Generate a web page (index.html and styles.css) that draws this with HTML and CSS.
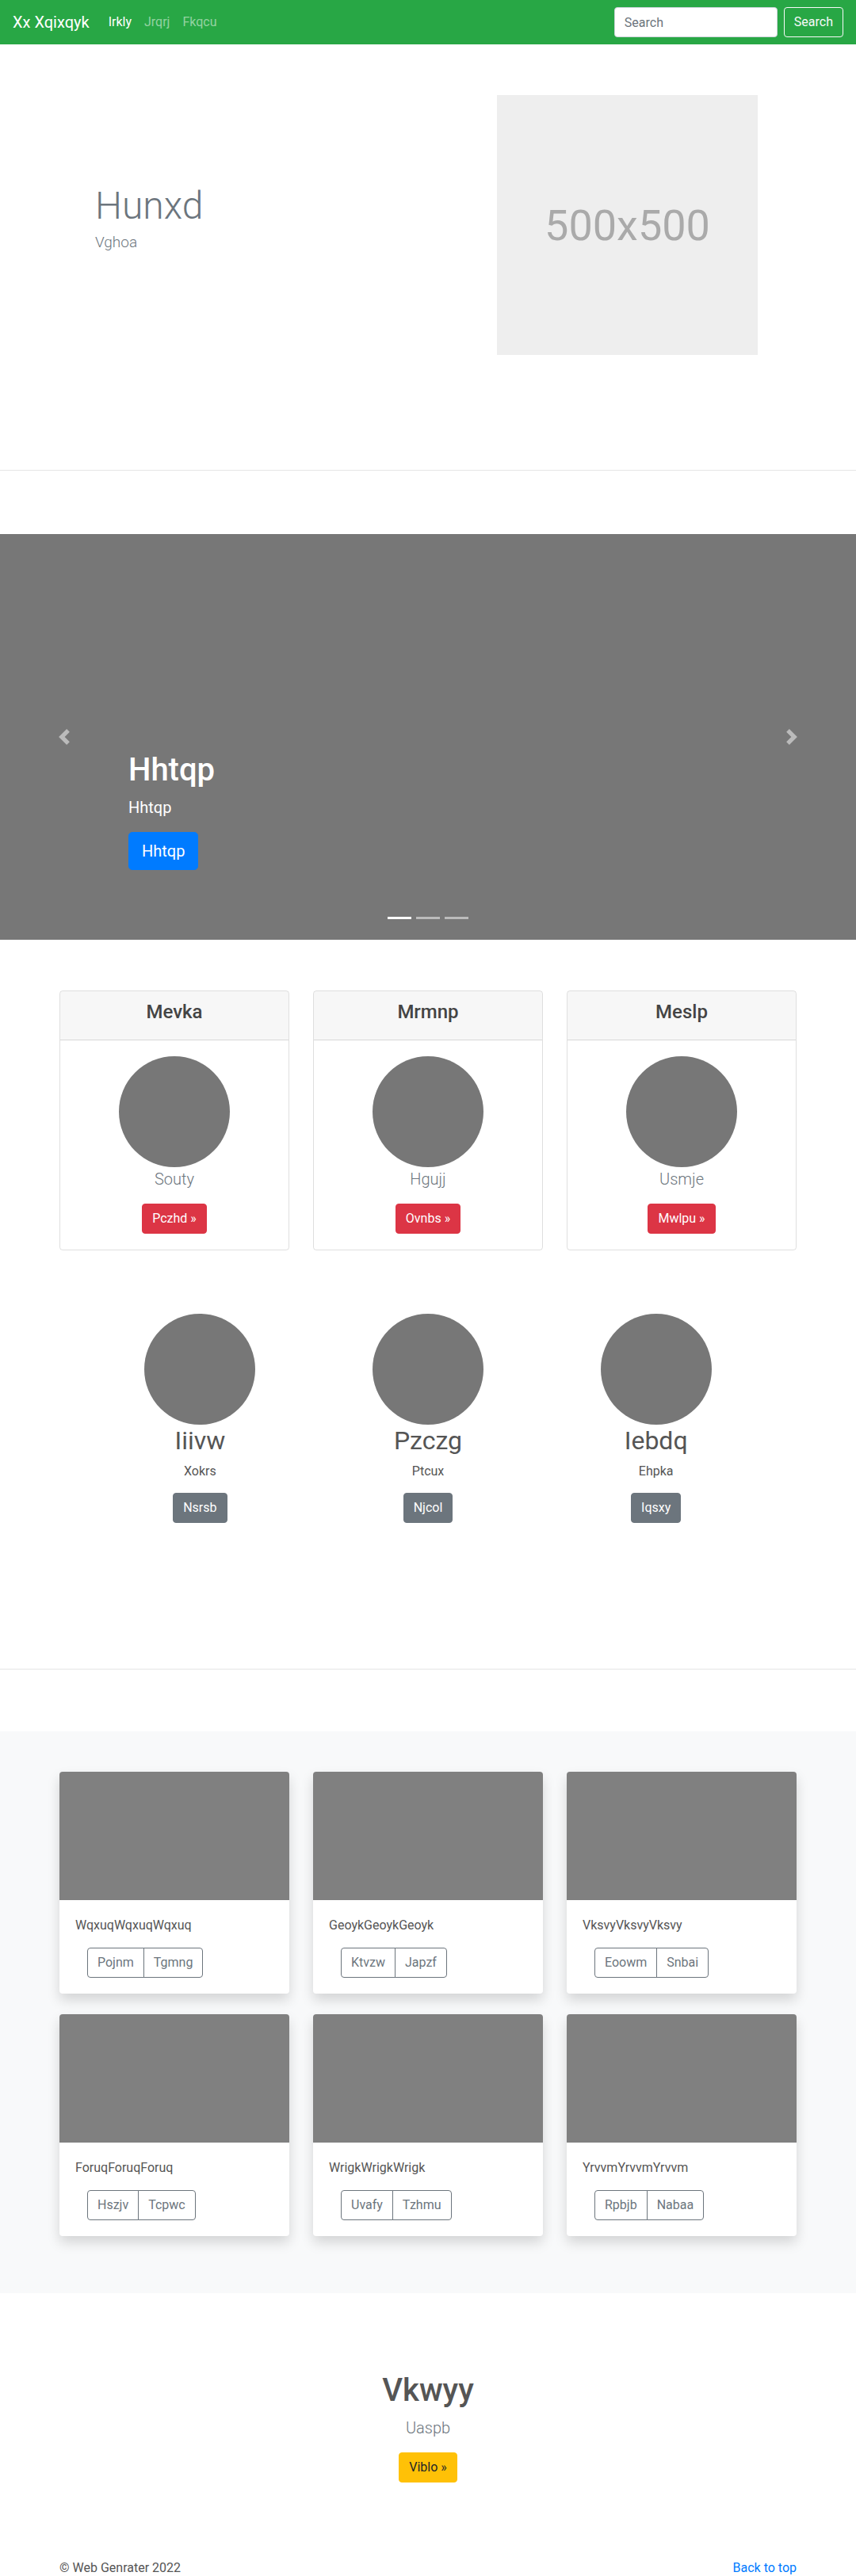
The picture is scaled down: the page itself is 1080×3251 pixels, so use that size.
FILE: index.html
```html
<!DOCTYPE html>
<html lang="en">
<head>
<meta charset="utf-8">
<title>Xx Xqixqyk</title>
<link rel="stylesheet" href="styles.css">
</head>
<body>
<nav class="navbar">
  <a class="brand" href="#">Xx Xqixqyk</a>
  <ul class="nav-links">
    <li><a class="nav-link active" href="#">Irkly</a></li>
    <li><a class="nav-link" href="#">Jrqrj</a></li>
    <li><a class="nav-link" href="#">Fkqcu</a></li>
  </ul>
  <form class="search">
    <input class="search-input" type="text" placeholder="Search">
    <button class="search-btn" type="button">Search</button>
  </form>
</nav>

<section class="hero">
  <div class="hero-inner">
    <div class="hero-text">
      <h1 class="hero-title">Hunxd</h1>
      <p class="hero-sub">Vghoa</p>
    </div>
    <div class="placeholder">500x500</div>
  </div>
</section>
<hr class="divider divider-hero">

<section class="carousel">
  <a class="carousel-control prev" href="#">
    <svg width="20" height="20" viewBox="0 0 8 8"><path fill="#fff" d="M5.25 0l-4 4 4 4 1.5-1.5L4.25 4l2.5-2.5L5.25 0z"/></svg>
  </a>
  <a class="carousel-control next" href="#">
    <svg width="20" height="20" viewBox="0 0 8 8"><path fill="#fff" d="M2.75 0l-1.5 1.5L3.75 4l-2.5 2.5L2.75 8l4-4-4-4z"/></svg>
  </a>
  <div class="carousel-caption">
    <h1 class="caption-title">Hhtqp</h1>
    <p class="caption-text">Hhtqp</p>
    <div class="caption-action"><a class="btn btn-lg btn-primary" href="#">Hhtqp</a></div>
  </div>
  <ol class="indicators">
    <li class="active"></li>
    <li></li>
    <li></li>
  </ol>
</section>

<section class="container card-deck">
  <div class="pcard">
    <div class="pcard-header"><h4 class="pcard-title">Mevka</h4></div>
    <div class="pcard-body">
      <div class="circle"></div>
      <p class="lead">Souty</p>
      <a class="btn btn-danger" href="#">Pczhd »</a>
    </div>
  </div>
  <div class="pcard">
    <div class="pcard-header"><h4 class="pcard-title">Mrmnp</h4></div>
    <div class="pcard-body">
      <div class="circle"></div>
      <p class="lead">Hgujj</p>
      <a class="btn btn-danger" href="#">Ovnbs »</a>
    </div>
  </div>
  <div class="pcard">
    <div class="pcard-header"><h4 class="pcard-title">Meslp</h4></div>
    <div class="pcard-body">
      <div class="circle"></div>
      <p class="lead">Usmje</p>
      <a class="btn btn-danger" href="#">Mwlpu »</a>
    </div>
  </div>
</section>

<section class="marketing">
  <div class="mcol">
    <div class="circle"></div>
    <h2 class="mtitle">Iiivw</h2>
    <p class="mtext">Xokrs</p>
    <div class="mact"><a class="btn btn-secondary" href="#">Nsrsb</a></div>
  </div>
  <div class="mcol">
    <div class="circle"></div>
    <h2 class="mtitle">Pzczg</h2>
    <p class="mtext">Ptcux</p>
    <div class="mact"><a class="btn btn-secondary" href="#">Njcol</a></div>
  </div>
  <div class="mcol">
    <div class="circle"></div>
    <h2 class="mtitle">Iebdq</h2>
    <p class="mtext">Ehpka</p>
    <div class="mact"><a class="btn btn-secondary" href="#">Iqsxy</a></div>
  </div>
</section>
<hr class="divider divider-mk">

<section class="album">
  <div class="container album-grid">
    <div class="acard">
      <div class="acard-img"></div>
      <div class="acard-body">
        <p class="acard-text">WqxuqWqxuqWqxuq</p>
        <div class="btn-group"><a class="btn btn-outline" href="#">Pojnm</a><a class="btn btn-outline" href="#">Tgmng</a></div>
      </div>
    </div>
    <div class="acard">
      <div class="acard-img"></div>
      <div class="acard-body">
        <p class="acard-text">GeoykGeoykGeoyk</p>
        <div class="btn-group"><a class="btn btn-outline" href="#">Ktvzw</a><a class="btn btn-outline" href="#">Japzf</a></div>
      </div>
    </div>
    <div class="acard">
      <div class="acard-img"></div>
      <div class="acard-body">
        <p class="acard-text">VksvyVksvyVksvy</p>
        <div class="btn-group"><a class="btn btn-outline" href="#">Eoowm</a><a class="btn btn-outline" href="#">Snbai</a></div>
      </div>
    </div>
    <div class="acard">
      <div class="acard-img"></div>
      <div class="acard-body">
        <p class="acard-text">ForuqForuqForuq</p>
        <div class="btn-group"><a class="btn btn-outline" href="#">Hszjv</a><a class="btn btn-outline" href="#">Tcpwc</a></div>
      </div>
    </div>
    <div class="acard">
      <div class="acard-img"></div>
      <div class="acard-body">
        <p class="acard-text">WrigkWrigkWrigk</p>
        <div class="btn-group"><a class="btn btn-outline" href="#">Uvafy</a><a class="btn btn-outline" href="#">Tzhmu</a></div>
      </div>
    </div>
    <div class="acard">
      <div class="acard-img"></div>
      <div class="acard-body">
        <p class="acard-text">YrvvmYrvvmYrvvm</p>
        <div class="btn-group"><a class="btn btn-outline" href="#">Rpbjb</a><a class="btn btn-outline" href="#">Nabaa</a></div>
      </div>
    </div>
  </div>
</section>

<section class="cta">
  <h1 class="cta-title">Vkwyy</h1>
  <p class="cta-lead">Uaspb</p>
  <div class="cta-act"><a class="btn btn-warning" href="#">Viblo »</a></div>
</section>

<footer class="container footer">
  <p class="footer-text">© Web Genrater 2022</p>
  <a class="footer-link" href="#">Back to top</a>
</footer>
</body>
</html>
```

FILE: styles.css
```css
* { box-sizing: border-box; }

body {
  margin: 0;
  font-family: Roboto, "Noto Sans", "Liberation Sans", sans-serif;
  font-size: 16px;
  line-height: 1.5;
  color: #555;
  background: #fff;
}

a { text-decoration: none; }

.container {
  width: 930px;
  margin-left: auto;
  margin-right: auto;
}

/* Navbar */
.navbar {
  display: flex;
  align-items: center;
  height: 56px;
  padding: 0 16px;
  background: #28a745;
}
.brand {
  font-size: 20px;
  line-height: 30px;
  color: #fff;
  margin-right: 16px;
}
.nav-links {
  display: flex;
  list-style: none;
  margin: 0;
  padding: 0;
}
.nav-link {
  display: block;
  padding: 8px;
  color: rgba(255, 255, 255, 0.5);
}
.nav-link.active { color: #fff; }
.search {
  margin: 0 0 0 auto;
  display: flex;
  align-items: center;
}
.search-input {
  width: 206px;
  height: 38px;
  padding: 6px 12px;
  border: 1px solid #ced4da;
  border-radius: 4px;
  font-family: inherit;
  font-size: 16px;
  color: #495057;
  margin-right: 8px;
}
.search-input::placeholder { color: #6c757d; }
.search-btn {
  height: 38px;
  padding: 6px 12px;
  border: 1px solid #f8f9fa;
  border-radius: 4px;
  background: transparent;
  color: #f8f9fa;
  font-family: inherit;
  font-size: 16px;
  line-height: 24px;
}

/* Hero */
.hero { padding: 64px 0 145px; }
.hero-inner {
  display: flex;
  justify-content: space-between;
  align-items: center;
  padding: 0 124px 0 120px;
}
.hero-text { padding-bottom: 16px; }
.hero-title {
  font-size: 48px;
  font-weight: 300;
  line-height: 1.2;
  color: #6c757d;
  margin: 0 0 3px;
}
.hero-sub {
  font-size: 19px;
  font-weight: 300;
  line-height: 1.5;
  color: #6c757d;
  margin: 0;
}
.placeholder {
  width: 329px;
  height: 328px;
  background: #eee;
  color: #aaa;
  font-size: 54px;
  display: flex;
  align-items: center;
  justify-content: center;
}

.divider {
  border: 0;
  border-top: 1px solid rgba(0, 0, 0, 0.1);
  margin: 0;
}
.divider-hero { margin-bottom: 80px; }
.divider-mk { margin-bottom: 78px; }

/* Carousel */
.carousel {
  position: relative;
  height: 512px;
  background: #777;
  margin-bottom: 64px;
}
.carousel-control {
  position: absolute;
  top: 0;
  bottom: 0;
  width: 15%;
  display: flex;
  align-items: center;
  justify-content: center;
  opacity: 0.5;
}
.carousel-control.prev { left: 0; }
.carousel-control.next { right: 0; }
.carousel-control svg { display: block; }
.carousel-caption {
  position: absolute;
  left: 15%;
  right: 15%;
  bottom: 52px;
  padding: 20px 0;
  color: #fff;
}
.caption-title {
  font-size: 40px;
  font-weight: 500;
  line-height: 1.2;
  margin: 0 0 8px;
}
.caption-text {
  font-size: 20px;
  line-height: 1.5;
  margin: 0 0 16px;
}
.caption-action { display: flex; margin-bottom: 16px; }
.indicators {
  position: absolute;
  left: 0;
  right: 0;
  bottom: 0;
  display: flex;
  justify-content: center;
  list-style: none;
  padding: 0;
  margin: 0 15% 16px;
}
.indicators li {
  box-sizing: content-box;
  width: 30px;
  height: 3px;
  margin: 0 3px;
  background: #fff;
  background-clip: padding-box;
  border-top: 10px solid transparent;
  border-bottom: 10px solid transparent;
  opacity: 0.5;
}
.indicators li.active { opacity: 1; }

/* Buttons */
.btn {
  display: inline-block;
  padding: 6px 12px;
  font-size: 16px;
  line-height: 24px;
  border: 1px solid transparent;
  border-radius: 4px;
  text-align: center;
}
.btn-lg {
  padding: 8px 16px;
  font-size: 20px;
  line-height: 30px;
  border-radius: 4.8px;
}
.btn-primary { background: #007bff; border-color: #007bff; color: #fff; }
.btn-danger { background: #dc3545; border-color: #dc3545; color: #fff; }
.btn-secondary { background: #6c757d; border-color: #6c757d; color: #fff; }
.btn-warning { background: #ffc107; border-color: #ffc107; color: #212529; }
.btn-outline { background: transparent; border-color: #6c757d; color: #6c757d; }

/* Pricing cards */
.card-deck {
  display: grid;
  grid-template-columns: repeat(3, 1fr);
  column-gap: 30px;
  margin-bottom: 80px;
}
.pcard {
  border: 1px solid rgba(0, 0, 0, 0.125);
  border-radius: 4px;
  text-align: center;
  overflow: hidden;
}
.pcard-header {
  background: rgba(0, 0, 0, 0.03);
  border-bottom: 1px solid rgba(0, 0, 0, 0.125);
  padding: 12px 20px;
}
.pcard-title {
  font-size: 24px;
  font-weight: 500;
  line-height: 1.2;
  color: #444;
  margin: 0 0 8px;
}
.pcard-body { padding: 20px; }
.circle {
  width: 140px;
  height: 140px;
  border-radius: 50%;
  background: #777;
  margin: 0 auto;
}
.lead {
  font-size: 20px;
  font-weight: 300;
  line-height: 1.5;
  color: #6c757d;
  margin: 0 0 16px;
}

/* Marketing */
.marketing {
  width: 863px;
  margin: 0 auto;
  display: grid;
  grid-template-columns: repeat(3, 1fr);
  text-align: center;
  padding-bottom: 184px;
}
.mtitle {
  font-size: 32px;
  font-weight: 400;
  line-height: 1.2;
  color: #555;
  margin: 1px 0 8px;
}
.mtext {
  margin: 0 0 15px;
  color: #555;
}
.mact { display: flex; justify-content: center; }

/* Album */
.album {
  background: #f8f9fa;
  padding: 51px 0 72px;
}
.album-grid {
  display: grid;
  grid-template-columns: repeat(3, 1fr);
  column-gap: 30px;
  row-gap: 26px;
}
.acard {
  background: #fff;
  border-radius: 4px;
  overflow: hidden;
  box-shadow: 0 8px 16px rgba(0, 0, 0, 0.15);
}
.acard-img {
  height: 162px;
  background: #808080;
}
.acard-body { padding: 20px; }
.acard-text {
  margin: 0 0 16px;
  color: #555;
}
.btn-group {
  display: inline-flex;
  margin-left: 15px;
}
.btn-group .btn:first-child {
  border-top-right-radius: 0;
  border-bottom-right-radius: 0;
}
.btn-group .btn + .btn {
  margin-left: -1px;
  border-top-left-radius: 0;
  border-bottom-left-radius: 0;
}

/* CTA */
.cta {
  text-align: center;
  padding-top: 99px;
}
.cta-title {
  font-size: 40px;
  font-weight: 500;
  line-height: 1.2;
  color: #555;
  margin: 0 0 8px;
}
.cta-lead {
  font-size: 20px;
  font-weight: 300;
  line-height: 1.5;
  color: #6c757d;
  margin: 0 0 16px;
}
.cta-act { display: flex; justify-content: center; }

/* Footer */
.footer {
  display: flex;
  justify-content: space-between;
  align-items: flex-start;
  padding-top: 96px;
}
.footer-text { margin: 0; color: #555; }
.footer-link { color: #007bff; }
```
